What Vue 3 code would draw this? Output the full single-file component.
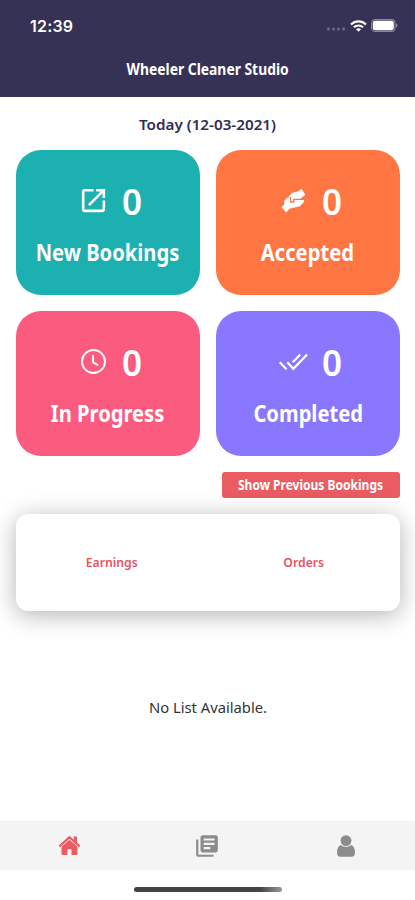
<script setup>
const stats = [
  { id: 'new', label: 'New Bookings', count: 0 },
  { id: 'accepted', label: 'Accepted', count: 0 },
  { id: 'progress', label: 'In Progress', count: 0 },
  { id: 'completed', label: 'Completed', count: 0 },
]
</script>

<template>
  <div class="screen">
    <header class="header">
      <div class="status">
        <span class="time">12:39</span>
        <div class="indicators">
          <svg class="dots" viewBox="0 0 20 4"><g fill="#68658a"><rect x="1" y="0.5" width="3" height="3" rx="1" /><rect x="6" y="0.5" width="3" height="3" rx="1" /><rect x="11" y="0.5" width="3" height="3" rx="1" /><rect x="16" y="0.5" width="3" height="3" rx="1" /></g></svg>
          <svg class="wifi" viewBox="0 0 17 12" fill="none" stroke="#fff" stroke-width="2.1"><path d="M1 4.4C5.2.3 11.8.3 16 4.4M3.9 7.3c2.6-2.5 6.6-2.5 9.2 0" /><path d="M6 9.3c1.4-1.3 3.6-1.3 5 0L8.5 11.8z" fill="#fff" stroke="none" /></svg>
          <svg class="battery" viewBox="0 0 28 13"><rect x="0.6" y="0.6" width="23.4" height="11.8" rx="3.5" fill="none" stroke="#89869d" stroke-width="1.1" /><rect x="1.8" y="1.7" width="21" height="9.6" rx="2.2" fill="#fff" /><path d="M25 4.5c2 .6 2 3.4 0 4z" fill="#89869d" /></svg>
        </div>
      </div>
      <h1 class="title"><span class="fit">Wheeler Cleaner Studio</span></h1>
    </header>

    <main class="main">
      <h2 class="today"><span class="fit">Today (12-03-2021)</span></h2>
      <section class="stats">
        <article v-for="s in stats" :key="s.id" class="stat" :class="s.id">
          <div class="figure">
            <svg v-if="s.id === 'new'" class="icon" viewBox="0 0 24 24" fill="#fff"><path d="M19 19H5V5h7V3H5c-1.11 0-2 .9-2 2v14c0 1.1.89 2 2 2h14c1.1 0 2-.9 2-2v-7h-2v7zM14 3v2h3.59l-9.83 9.83 1.41 1.41L19 6.41V10h2V3h-7z" /></svg>
            <svg v-else-if="s.id === 'accepted'" class="icon" viewBox="0 0 32 32" fill="#fff"><path d="M24.300 3.800L28.300 10.300 25.200 12.400 23.300 14.300H15.600V16.900H13.600V12L10.400 12.600 14.600 8 20.600 6.800z" /><path d="M9.200 13.200L12.400 13V18.200H17V15.600H26.800V17.500L22.400 22 16 23.400 11.900 24.600 8.400 28.300 3.600 22.600 6.400 20.200 6.500 16.200z" /></svg>
            <svg v-else-if="s.id === 'progress'" class="icon" viewBox="0 0 24 24" fill="none" stroke="#fff" stroke-width="1.5"><circle cx="12" cy="12" r="8.9" /><path d="M11.700 7v5.700l4 2.200" /></svg>
            <svg v-else class="icon" viewBox="0 0 32 32" fill="none" stroke="#fff" stroke-width="2.3"><path d="M1.800 16.800l7 7.300M9.600 16.800l6.200 6.700L30 8.700M23 8.700l-7.800 8" /></svg>
            <span class="count">{{ s.count }}</span>
          </div>
          <div class="label"><span class="fit">{{ s.label }}</span></div>
        </article>
      </section>
      <button class="previous"><span class="fit">Show Previous Bookings</span></button>
      <section class="summary">
        <div><span class="fit">Earnings</span></div>
        <div><span class="fit">Orders</span></div>
      </section>
      <p class="empty"><span class="fit">No List Available.</span></p>
    </main>

    <nav class="tabs">
      <a class="tab"><svg class="home" viewBox="0 0 24 24" fill="#e85c62"><path d="M12 1.900L.7 12l1.400 1.700L12 4.900l9.900 8.800 1.400-1.700-3.500-3.200V2.600h-3.300v3.300z" /><path d="M12 6l-8.300 7.400v7.400c0 .6.4 1 1 1h5.200v-6h4.200v6h5.200c.6 0 1-.4 1-1v-7.400z" /></svg></a>
      <a class="tab"><svg class="library" viewBox="0 0 24 24" fill="#8c8c8c"><path d="M4 6H2v14c0 1.1.9 2 2 2h14v-2H4V6zm16-4H8c-1.1 0-2 .9-2 2v12c0 1.1.9 2 2 2h12c1.1 0 2-.9 2-2V4c0-1.1-.9-2-2-2zm-1 9H9V9h10v2zm-4 4H9v-2h6v2zm4-8H9V5h10v2z" /></svg></a>
      <a class="tab"><svg class="person" viewBox="0 0 20 22" fill="#8c8c8c"><circle cx="10" cy="5.6" r="5.4" /><path d="M4.900 9.900C2.300 10.800 1 13.800 1 17.800 1 20.400 2.400 21.700 4.400 21.700h11.200c2 0 3.400-1.300 3.400-3.900 0-4-1.300-7-3.900-7.900-2.800 2.600-7.400 2.600-10.200 0z" /></svg></a>
    </nav>
    <footer class="foot"><div class="indicator"></div></footer>
  </div>
</template>

<style>
body { margin: 0; background: #fff; }
</style>

<style scoped>
.screen { width: 415px; height: 900px; display: flex; flex-direction: column; overflow: hidden; background: #fff; font-family: "Noto Sans", "Open Sans", sans-serif; font-weight: 700; box-sizing: border-box; }
.fit { display: inline-block; white-space: nowrap; }
h1, h2, p { margin: 0; }
.header { height: 97px; flex: none; background: #353255; color: #fff; }
.status { height: 50px; display: flex; align-items: center; justify-content: space-between; padding: 1px 16px 0 30px; box-sizing: border-box; }
.time { font: 600 16px/20px Inter, sans-serif; letter-spacing: 0.2px; }
.indicators { display: flex; align-items: center; gap: 4px; }
.dots { width: 20px; height: 4px; margin-top: 7px; }
.wifi { width: 17px; height: 12px; }
.battery { width: 28px; height: 13px; }
.title { height: 38px; display: flex; justify-content: center; align-items: center; font-size: 15.5px; }
.title .fit { transform: scaleX(0.895); }
.main { flex: 1; display: flex; flex-direction: column; padding: 0 15.5px 0 16px; }
.today { height: 53px; display: flex; align-items: center; justify-content: center; font-size: 15px; font-weight: 600; color: #302d52; }
.today .fit { transform: scaleX(1.015); }
.stats { display: grid; grid-template-columns: 1fr 1fr; grid-auto-rows: 144.5px; gap: 16.5px; }
.stat { border-radius: 25px; color: #fff; display: flex; flex-direction: column; align-items: center; }
.new { background: #1cb0b1; }
.accepted { background: #ff7643; }
.progress { background: #fb5b7e; }
.completed { background: #8978ff; }
.figure { display: flex; align-items: center; gap: 12px; margin-top: 23px; padding-left: 5px; height: 54px; }
.icon { width: 31px; height: 31px; }
.count { width: 22px; text-align: center; font-size: 36.5px; font-weight: 600; line-height: 54px; padding-top: 2px; transform: scaleX(0.96); }
.label { font-size: 24px; line-height: 32px; margin-top: 9px; }
.label .fit { transform: scaleX(0.84); }
.previous { align-self: flex-end; width: 178px; height: 26px; margin-top: 16.5px; padding: 0; border: 0; border-radius: 3px; background: #e85c62; color: #fff; font: inherit; font-size: 13.5px; line-height: 26px; display: flex; justify-content: center; }
.previous .fit { transform: scaleX(0.89); }
.summary { height: 96.5px; margin-top: 16px; display: grid; grid-template-columns: 1fr 1fr; align-items: center; text-align: center; border-radius: 12px; color: #e6535f; font-size: 13px; font-weight: 600; background: #fff; box-shadow: 0 4px 24px rgba(0, 0, 0, 0.3); }
.summary .fit { transform: scaleX(0.94); }
.empty { margin-top: 85px; text-align: center; font-size: 15px; line-height: 22px; font-weight: 400; color: #333; }
.empty .fit { transform: scaleX(0.985); }
.tabs { height: 49px; flex: none; display: grid; grid-template-columns: 1fr 1fr 1fr; background: #f4f4f4; }
.tab { display: flex; align-items: center; justify-content: center; }
.home { width: 23px; height: 23px; }
.library { width: 26px; height: 26px; }
.person { width: 20px; height: 22px; }
.foot { height: 30px; flex: none; display: flex; justify-content: center; }
.indicator { width: 148px; height: 5px; margin-top: 17px; border-radius: 3px; background: linear-gradient(90deg, #444 85%, #999); }
</style>
